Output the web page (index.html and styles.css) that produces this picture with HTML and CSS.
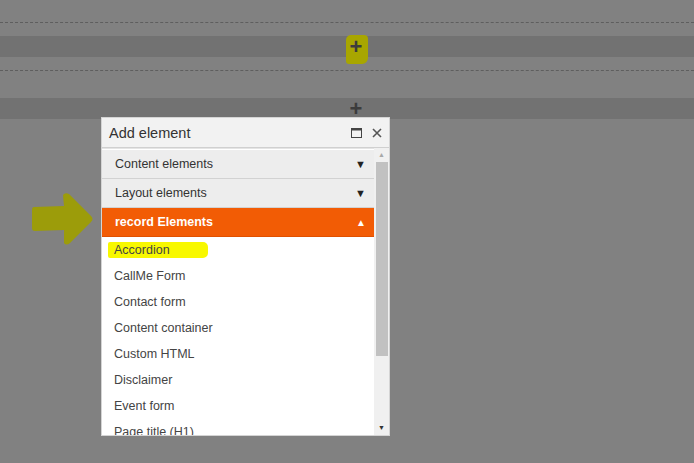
FILE: index.html
```html
<!DOCTYPE html>
<html lang="en">
<head>
<meta charset="UTF-8">
<title>Add element</title>
<link rel="stylesheet" href="styles.css">
</head>
<body>
<div class="stage">
  <div class="gap g1"></div>
  <div class="dash"></div>
  <div class="gap g2"></div>
  <div class="band"><span class="plus marked">+</span></div>
  <div class="gap g2"></div>
  <div class="dash"></div>
  <div class="gap g3"></div>
  <div class="band"><span class="plus">+</span></div>
</div>

<svg class="arrow" width="62" height="54" viewBox="0 0 62 54">
  <path d="M2 15 L32 14 L31 3 Q33 0 37 2 L59 24 Q62 27 59 30 L38 51 Q34 54 32 51 L32 38 L3 39 Q0 39 0 36 L0 18 Q0 15 2 15 Z" fill="#9c9c0a"/>
</svg>

<div class="dialog">
  <div class="dialog-head">
    <span class="dialog-title">Add element</span>
    <span class="head-icons">
      <svg width="11" height="10" viewBox="0 0 11 10"><rect x="0.5" y="0.5" width="10" height="9" fill="none" stroke="#444"/><rect x="0.5" y="0.5" width="10" height="2" fill="#444"/></svg>
      <svg width="10" height="10" viewBox="0 0 10 10"><path d="M1 1 L9 9 M9 1 L1 9" stroke="#555" stroke-width="1.6"/></svg>
    </span>
  </div>
  <div class="dialog-body">
    <div class="list">
      <div class="section">Content elements<span class="caret">&#9660;</span></div>
      <div class="section">Layout elements<span class="caret">&#9660;</span></div>
      <div class="section open">record Elements<span class="caret">&#9650;</span></div>
      <div class="item"><span class="hl">Accordion</span></div>
      <div class="item">CallMe Form</div>
      <div class="item">Contact form</div>
      <div class="item">Content container</div>
      <div class="item">Custom HTML</div>
      <div class="item">Disclaimer</div>
      <div class="item">Event form</div>
      <div class="item">Page title (H1)</div>
    </div>
    <div class="scrollbar">
      <span class="sb-arrow">&#9650;</span>
      <div class="thumb"></div>
      <span class="sb-arrow down">&#9660;</span>
    </div>
  </div>
</div>
</body>
</html>
```

FILE: styles.css
```css
html, body {
  margin: 0;
  height: 100%;
}
body {
  background-color: #818181;
  font-family: 'Liberation Sans', Arial, sans-serif;
  overflow: hidden;
  position: relative;
}
.stage {
  display: flex;
  flex-direction: column;
}
.gap.g1 { height: 22px; }
.gap.g2 { height: 13px; }
.gap.g3 { height: 27px; }
.dash {
  border-top: 1px dashed #5e5e5e;
}
.band {
  height: 21px;
  background-color: #727272;
  display: flex;
  justify-content: center;
  align-items: center;
}
.plus {
  font-size: 22px;
  font-weight: bold;
  line-height: 21px;
  color: #3c3c3c;
  padding-left: 18px;
}
.plus.marked {
  position: relative;
  z-index: 0;
}
.plus.marked::before {
  content: '';
  position: absolute;
  left: 14px;
  top: -1px;
  width: 22px;
  height: 29px;
  background-color: #a8a600;
  border-radius: 5px 4px 6px 3px;
  z-index: -1;
}
.arrow {
  position: absolute;
  left: 32px;
  top: 192px;
}
.dialog {
  position: absolute;
  left: 101px;
  top: 117px;
  width: 287px;
  height: 317px;
  background-color: #fff;
  border: 1px solid #d4d4d4;
  display: flex;
  flex-direction: column;
}
.dialog-head {
  height: 29px;
  background-color: #f2f2f2;
  border-bottom: 1px solid #d0d0d0;
  display: flex;
  align-items: center;
  justify-content: space-between;
  padding: 0 7px 0 7px;
}
.dialog-title {
  font-size: 14.5px;
  color: #333;
}
.head-icons {
  display: flex;
  align-items: center;
  gap: 10px;
}
.dialog-body {
  flex: 1;
  display: flex;
  overflow: hidden;
}
.list {
  flex: 1;
  border-top: 1px solid #e4e4e4;
  padding-top: 1px;
}
.section {
  height: 28px;
  background-color: #ededed;
  border-bottom: 1px solid #d2d2d2;
  display: flex;
  align-items: center;
  justify-content: space-between;
  padding: 0 8px 0 13px;
  font-size: 12.5px;
  color: #333;
}
.section.open {
  background-color: #f25c05;
  border-bottom-color: #e05000;
  color: #fff;
  font-weight: bold;
}
.caret {
  font-size: 11px;
  color: #222;
}
.section.open .caret {
  font-size: 10px;
  color: #fff;
}
.item {
  height: 26px;
  display: flex;
  align-items: center;
  padding-left: 12px;
  font-size: 12.5px;
  color: #444;
}
.hl {
  background-color: #f8f800;
  margin-left: -6px;
  padding: 1px 38px 1px 6px;
  border-radius: 2px 5px 5px 2px;
}
.scrollbar {
  width: 15px;
  background-color: #f0f0f0;
  display: flex;
  flex-direction: column;
  align-items: center;
}
.sb-arrow {
  font-size: 7px;
  color: #a8a8a8;
  height: 14px;
  line-height: 14px;
}
.sb-arrow.down {
  margin-top: auto;
  color: #333;
}
.thumb {
  width: 12px;
  height: 194px;
  background-color: #c1c1c1;
}
```
